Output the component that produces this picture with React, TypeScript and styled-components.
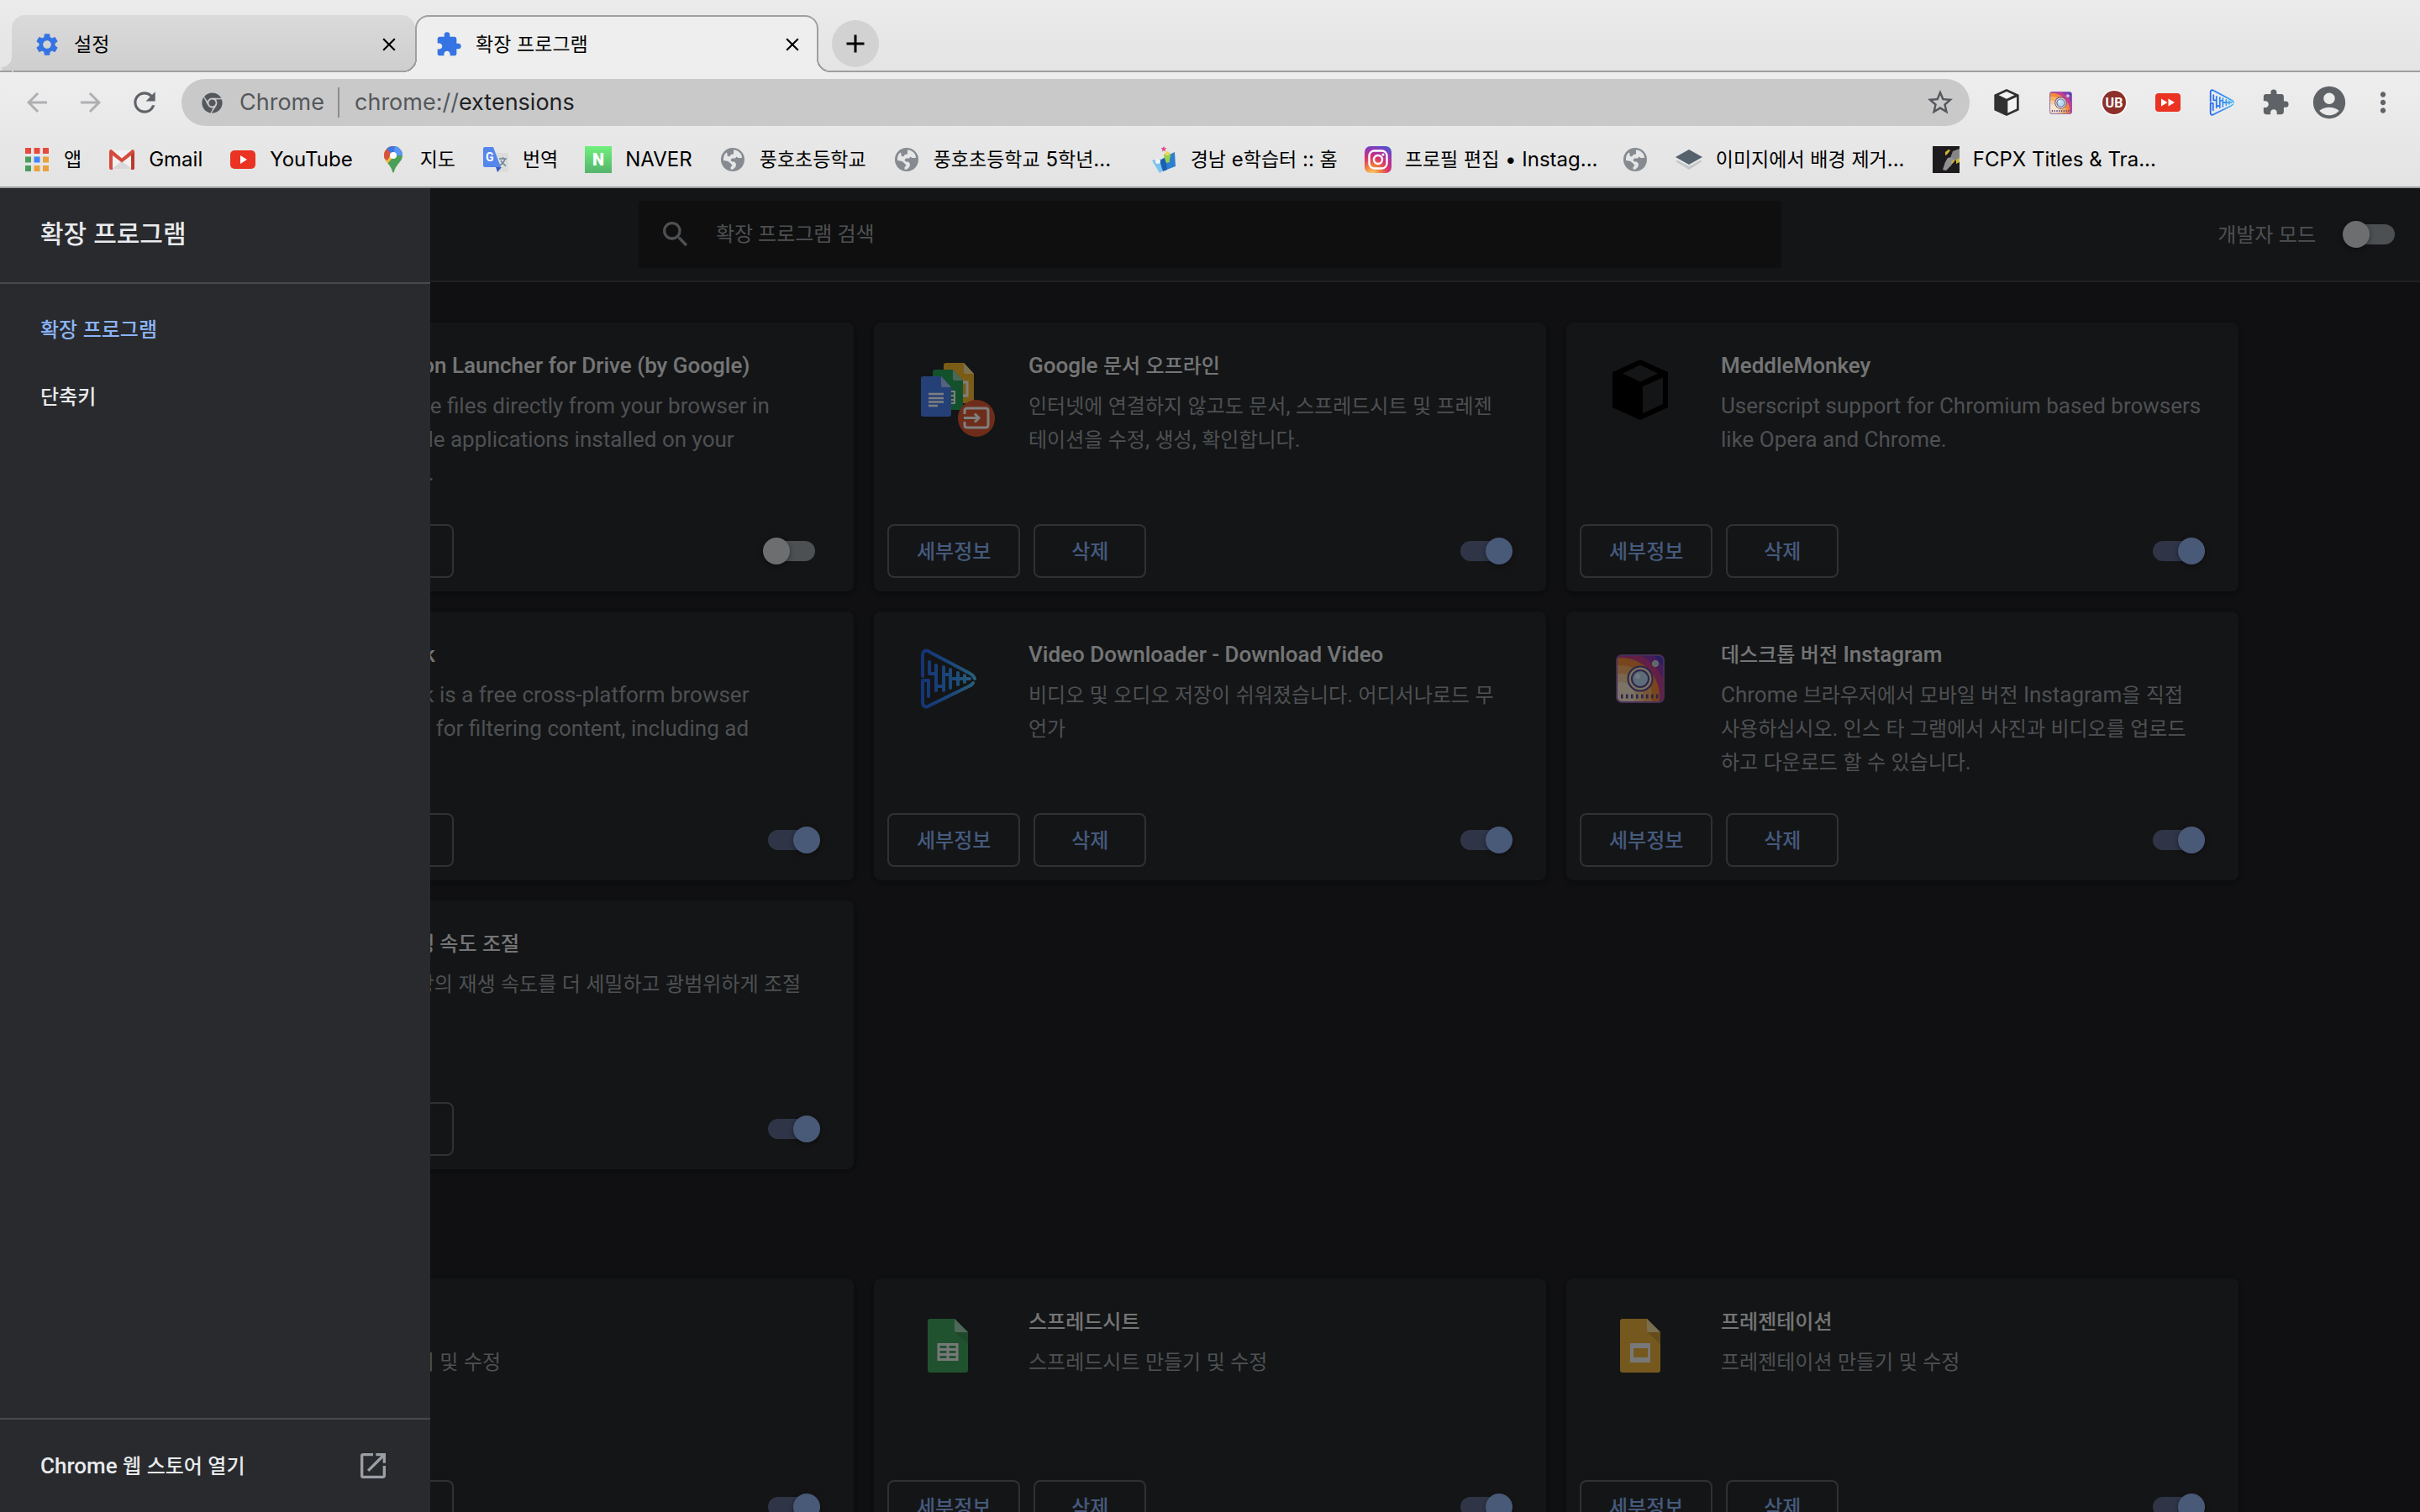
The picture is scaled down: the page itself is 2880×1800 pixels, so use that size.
import React from "react";
import styled, { createGlobalStyle, css } from "styled-components";
import {
  MdAccountCircle,
  MdAdd,
  MdArrowBack,
  MdArrowForward,
  MdClose,
  MdExtension,
  MdMoreVert,
  MdOpenInNew,
  MdRefresh,
  MdSearch,
  MdSettings,
  MdStarBorder,
} from "react-icons/md";
import { FaChrome } from "react-icons/fa";

const ui = '"Inter", "Noto Sans CJK KR", sans-serif';
const page = '"Roboto", "Noto Sans CJK KR", sans-serif';

const color = {
  line: "#9f9f9f",
  chromeIcon: "#5f6368",
  surface: "#292a2d",
  background: "#202124",
  text: "#e8eaed",
  muted: "#9aa0a6",
  accent: "#8ab4f8",
};

const GlobalStyle = createGlobalStyle`
  *, *::before, *::after { box-sizing: border-box; }
  html, body { margin: 0; padding: 0; background: ${color.background}; }
  body { overflow: hidden; }
  h1, h2, h3, p, ul { margin: 0; padding: 0; font-weight: inherit; font-size: inherit; }
  ul { list-style: none; }
  a { color: inherit; text-decoration: none; }
  button, input { font: inherit; color: inherit; margin: 0; padding: 0; border: 0; background: none; outline: none; }
  svg { display: block; flex: none; }
`;

/* Hangul is set a little smaller than the Latin letters beside it. */
const HangulRun = styled.span<{ $size: number }>`
  font-size: ${(p) => p.$size}px;
  line-height: 1;
`;

function Mixed({ text, size = 24 }: { text: string; size?: number }) {
  return (
    <>
      {text.split(/([가-힣]+)/).map((part, i) =>
        i % 2 ? (
          <HangulRun key={i} $size={size}>
            {part}
          </HangulRun>
        ) : (
          part
        )
      )}
    </>
  );
}

/* ---------- icons ---------- */

const AppsIcon = () => (
  <svg width="28" height="28" viewBox="0 0 28 28">
    {["#e64a3c", "#e64a3c", "#e64a3c", "#4a9e5c", "#4285f4", "#e9a23b", "#4a9e5c", "#e9a23b", "#e9a23b"].map((c, i) => (
      <rect key={i} x={(i % 3) * 10.5} y={Math.floor(i / 3) * 10.5} width="7" height="7" fill={c} />
    ))}
  </svg>
);

const GmailIcon = () => (
  <svg width="30" height="24" viewBox="0 0 30 24">
    <rect x="1" y="1" width="28" height="22" rx="2" fill="#f1f1f1" />
    <path d="M15 14 27 23H3z" fill="#d8d8d8" />
    <path d="M0 2.500C0 1 1 0 2.500 0L15 10.500 27.500 0C29 0 30 1 30 2.500V22a2 2 0 0 1-2 2h-2V7L15 15.500 4 7v17H2a2 2 0 0 1-2-2z" fill="#d54b3d" />
    <path d="M26 7l4-4.500V22a2 2 0 0 1-2 2h-2z" fill="#b93a2e" />
  </svg>
);

const YouTubeIcon = () => (
  <svg width="30" height="22" viewBox="0 0 30 22">
    <rect width="30" height="22" rx="5" fill="#ea3323" />
    <path d="M12 6v10l8-5z" fill="#fff" />
  </svg>
);

const MapsIcon = () => (
  <svg width="22" height="32" viewBox="0 0 22 32">
    <defs>
      <clipPath id="pin">
        <path d="M11 0a11 11 0 0 1 11 11c0 4-2 6.500-4.500 9.500S13 26 12 30.500c-.3 1.500-1.700 1.500-2 0C9 26 7 23.500 4.500 20.500S0 15 0 11A11 11 0 0 1 11 0z" />
      </clipPath>
    </defs>
    <g clipPath="url(#pin)">
      <rect width="22" height="32" fill="#4b9f58" />
      <path d="M0 0h22L4 21-4 16z" fill="#f2bb42" />
      <path d="M0 0h14L4 17-4 12z" fill="#d8503f" />
      <path d="M3 3 11 11 22 8V0H4z" fill="#3f77e0" />
      <path d="M13 0h9v11L11 11z" fill="#5b96f3" />
    </g>
    <circle cx="11" cy="11" r="4" fill="#fff" />
  </svg>
);

const TranslateIcon = () => (
  <svg width="30" height="30" viewBox="0 0 30 30">
    <path d="M11 7h17a2 2 0 0 1 2 2v19a2 2 0 0 1-2 2H17z" fill="#dcdcdc" />
    <path d="M15 24h7l-5 6z" fill="#3a5bc0" />
    <path d="M2 0h10l9 24H2a2 2 0 0 1-2-2V2a2 2 0 0 1 2-2z" fill="#5586ec" />
    <path d="M19 14h9M23.500 12v2M26 14c-1 4-3.500 6.500-7 8M21 16c1.500 3 3.500 5 6 6.500" fill="none" stroke="#6b8494" strokeWidth="1.500" />
    <text x="3" y="17" fontFamily="Roboto" fontWeight="700" fontSize="14" fill="#fff">G</text>
  </svg>
);

const NaverIcon = () => (
  <svg width="32" height="32" viewBox="0 0 32 32">
    <defs>
      <linearGradient id="naver" x1="0" y1="0" x2="0" y2="1">
        <stop offset="0" stopColor="#6ff07c" />
        <stop offset="1" stopColor="#55b36c" />
      </linearGradient>
    </defs>
    <rect width="32" height="32" fill="url(#naver)" />
    <text x="16" y="23" textAnchor="middle" fontFamily="Roboto" fontWeight="900" fontSize="20" fill="#fff">N</text>
  </svg>
);

const GlobeIcon = () => (
  <svg width="28" height="28" viewBox="0 0 28 28">
    <circle cx="14" cy="14" r="14" fill="#868b91" />
    <path d="M15 2.500c4 0 8 2.500 9.500 6.500l.5 3h-4.500l-2-1.500-1.500 2h-4l-1.500 2 1.500 2h3l2 2.500-.5 3.500-3 3-3 .3V23l2-2-2-2.500-3-2.500-5.500-1c-.5-4 1-7.500 3.500-9.500l1 1v3l2.500 1 2-2.500 3-.5z" fill="#e6e6e6" />
  </svg>
);

const LearningIcon = () => (
  <svg width="30" height="32" viewBox="0 0 30 32">
    <path d="M1 17l10-2 5 13-6 4z" fill="#7cc4ef" />
    <path d="M16 13l12-6 1 17-13 5z" fill="#2f7fd0" />
    <path d="M10 17l7-4 2 15-5 2z" fill="#1b5fb4" />
    <circle cx="8" cy="18" r="3" fill="#f3f3f3" />
    <path d="M15 10c2-2 4-1 4 1l4-3c1 4-2 7-1 11l-4 1c-1-4-3-6-3-10z" fill="#9bd04d" />
    <circle cx="19" cy="8.500" r="2.500" fill="#f3d65a" />
    <path d="M15 0l1 2 2.500.3-2 1.700.6 2.500L15 5.200l-2.200 1.300.6-2.500-2-1.700L14 2z" fill="#e0508d" />
  </svg>
);

const InstagramIcon = () => (
  <svg width="32" height="32" viewBox="0 0 32 32">
    <defs>
      <radialGradient id="ig" cx=".28" cy="1.050" r="1.150">
        <stop offset="0" stopColor="#fbd872" />
        <stop offset=".28" stopColor="#f0803f" />
        <stop offset=".55" stopColor="#d8316f" />
        <stop offset=".8" stopColor="#9a35b0" />
        <stop offset="1" stopColor="#4c56cf" />
      </radialGradient>
    </defs>
    <rect width="32" height="32" rx="7" fill="url(#ig)" />
    <rect x="5.500" y="5.500" width="21" height="21" rx="6" fill="none" stroke="#fff" strokeWidth="2.400" />
    <circle cx="16" cy="16" r="5" fill="none" stroke="#fff" strokeWidth="2.400" />
    <circle cx="22" cy="10" r="1.500" fill="#fff" />
  </svg>
);

const LayersIcon = () => (
  <svg width="32" height="24" viewBox="0 0 32 24">
    <path d="M16 6 32 14 16 24 0 14z" fill="#c3c8cc" />
    <path d="M16 3 32 11.500 16 20 0 11.500z" fill="#e8e8e8" />
    <path d="M16 0 32 9 16 18 0 9z" fill="#55616c" />
  </svg>
);

const FcpxIcon = () => (
  <svg width="32" height="32" viewBox="0 0 32 32">
    <rect width="32" height="32" fill="#1d1b1e" />
    <path d="M24 6l8-3v12l-4 2-4 1-3-4z" fill="#858487" />
    <path d="M18 14l5-1 3 4-4 6-6 6-4-1 3-9z" fill="#929194" />
    <path d="M15 7l4-3 2 1-4 5-2 1zM28 16l4-2v5l-4 2zM22 19l3-3 1 2-3 3z" fill="#cdb82e" />
  </svg>
);

const CubeIcon = ({ size, shade, face }: { size: number; shade: string; face: string }) => (
  <svg width={size} height={size} viewBox="0 0 72 72">
    <path d="M36 0 69 15v42L36 72 3 57V15z" fill={shade} />
    <path d="M36 6.500 57 16.500 36 26.500 15 16.500z" fill={face} />
    <path d="M39 32 63 21.500V53L39 64z" fill={face} />
  </svg>
);

/* `margin` is the empty frame kept around the camera, in drawing units. */
const CameraIcon = ({ size, margin = 0 }: { size: number; margin?: number }) => (
  <svg width={size} height={size} viewBox={`${-margin} ${-margin} ${58 + 2 * margin} ${58 + 2 * margin}`}>
    <defs>
      <clipPath id="camera">
        <rect x="1" y="1" width="56" height="56" rx="6" />
      </clipPath>
    </defs>
    <g clipPath="url(#camera)">
      <rect width="58" height="58" fill="#4d3fc4" />
      <circle cx="6" cy="50" r="62" fill="#8d39b5" />
      <circle cx="6" cy="50" r="54" fill="#c4418f" />
      <circle cx="6" cy="50" r="46" fill="#f08a3c" />
      <circle cx="6" cy="50" r="37" fill="#f3ae68" />
      <circle cx="6" cy="50" r="27" fill="#f2cfa0" />
      <circle cx="6" cy="50" r="17" fill="#f7e6cc" />
    </g>
    <rect x="1" y="1" width="56" height="56" rx="6" fill="none" stroke="#8f5fa8" strokeWidth="2" />
    <circle cx="29" cy="29" r="15.500" fill="#5a4a92" />
    <circle cx="29" cy="29" r="13.500" fill="#f2e2c4" />
    <circle cx="29" cy="29" r="11" fill="#5a4a92" />
    <circle cx="29" cy="29" r="9" fill="#b9d8f2" />
    <circle cx="26" cy="26" r="3" fill="#e4f3ff" />
    <circle cx="47" cy="11" r="3.500" fill="#9fd8e6" stroke="#f2e2c4" strokeWidth="1" />
    <path d="M6 50h46" stroke="#5a4a92" strokeWidth="5" strokeDasharray="2.500 3.500" />
  </svg>
);

const UBlockIcon = () => (
  <svg width="32" height="32" viewBox="0 0 32 32">
    <circle cx="16" cy="16" r="15.500" fill="#fff" />
    <circle cx="16" cy="16" r="14" fill="#8d2f2a" />
    <text x="16" y="21.500" textAnchor="middle" fontFamily="Roboto" fontWeight="700" fontSize="16" fill="#fff">UB</text>
  </svg>
);

const SpeedIcon = () => (
  <svg width="32" height="22" viewBox="0 0 32 22">
    <rect x="1" width="30" height="22" rx="4" fill="#ea3323" />
    <path d="M8 6.500v9l7.500-4.500zM16.500 6.500v9L24 11z" fill="#fff" />
  </svg>
);

const WaveIcon = ({ size, id }: { size: number; id: string }) => (
  <svg width={size} height={size} viewBox="0 0 72 72">
    <defs>
      <linearGradient id={id} gradientUnits="userSpaceOnUse" x1="0" y1="0" x2="72" y2="0">
        <stop offset="0" stopColor="#2563ef" />
        <stop offset=".55" stopColor="#3690f4" />
        <stop offset="1" stopColor="#54c3f0" />
      </linearGradient>
    </defs>
    <g fill="none" stroke={`url(#${id})`} strokeWidth="4" strokeLinecap="round" strokeLinejoin="round">
      <path d="M6 33V8c0-5 4-7 8-4l47 25c4 2 6 4 7 7" />
      <path d="M66 41c-1 2-3 3-5 4L14 68c-4 3-8 1-8-4V38h7v19" />
      <path d="M14 16v14h8M22 20v30M22 45h8M31 22v28M31 31h8M39 25v22M39 36h23M48 29v14M56 32v8" />
    </g>
  </svg>
);

const FilePaper = ({ x, y, fill, fold }: { x: number; y: number; fill: string; fold: string }) => (
  <g transform={`translate(${x} ${y})`}>
    <path d="M3 0h21l12 13v32a3 3 0 0 1-3 3H3a3 3 0 0 1-3-3V3a3 3 0 0 1 3-3z" fill={fill} />
    <path d="M24 0l12 13H26a2 2 0 0 1-2-2z" fill={fold} />
  </g>
);

const DocsOfflineIcon = () => (
  <svg width="96" height="96" viewBox="0 0 96 96">
    <FilePaper x={31} y={4} fill="#f4b92f" fold="#fae3a4" />
    <rect x="52" y="27" width="7" height="16" fill="none" stroke="#fff" strokeWidth="3" />
    <FilePaper x={18} y={12} fill="#27a35a" fold="#93d1ac" />
    <path d="M38 38h6v14h-6M38 43h6M38 48h6" fill="none" stroke="#fff" strokeWidth="2" />
    <FilePaper x={4} y={20} fill="#4a80ef" fold="#a6c4fa" />
    <path d="M13 41h18M13 46h18M13 50.500h18M13 55h11" stroke="#fff" strokeWidth="2.500" />
    <circle cx="70" cy="70" r="22" fill="#dd5a34" />
    <path d="M56 65v-4c0-2 1-3 3-3h22c2 0 3 1 3 3v17c0 2-1 3-3 3H59c-2 0-3-1-3-3v-4M55 69.500h18M68 64.500l5 5-5 5" fill="none" stroke="#fff" strokeWidth="3" />
  </svg>
);

const AppFileIcon = ({ kind }: { kind: "docs" | "sheets" | "slides" }) => {
  const fill = { docs: "#4285f4", sheets: "#43a560", slides: "#e8b13d" }[kind];
  const fold = { docs: "#a6c4fa", sheets: "#9fd0ad", slides: "#f3dc9d" }[kind];
  return (
    <svg width="72" height="72" viewBox="0 0 72 72">
      <path d="M15 4h29l16 16v45a3 3 0 0 1-3 3H15a3 3 0 0 1-3-3V7a3 3 0 0 1 3-3z" fill={fill} />
      <path d="M44 20h16v14z" fill="#000" opacity=".12" />
      <path d="M44 4l16 16H46a2 2 0 0 1-2-2z" fill={fold} />
      {kind === "docs" && <path d="M22 36h28M22 43h28M22 50h20" stroke="#f1f1f1" strokeWidth="4" />}
      {kind === "sheets" && (
        <path d="M25 34.500h22v18H25zM25 40.500h22M25 46.500h22M36 34v19" fill="none" stroke="#f1f1f1" strokeWidth="3" />
      )}
      {kind === "slides" && <path d="M24 33h24v23H24zM28 39v11h17V39z" fill="#f1f1f1" fillRule="evenodd" />}
    </svg>
  );
};

/* ---------- browser frame ---------- */

const Window = styled.div`
  display: flex;
  flex-direction: column;
  height: 100vh;
  overflow: hidden;
`;

const TabStrip = styled.div`
  flex: none;
  display: flex;
  align-items: stretch;
  height: 86px;
  padding: 18px 14px 0;
  background: linear-gradient(#ebebeb, #e4e4e4);
  box-shadow: inset 0 -2px ${color.line};
  font: 24px/32px ${ui};
  color: #000;
`;

const Tab = styled.div<{ $active?: boolean }>`
  position: relative;
  flex: 0 1 480px;
  display: flex;
  align-items: center;
  gap: 16px;
  padding: 0 18px 0 24px;
  border: 2px solid transparent;
  border-bottom: 0;
  border-radius: 16px 16px 0 0;

  &::before,
  &::after {
    content: "";
    position: absolute;
    bottom: 0;
    width: 16px;
    height: 16px;
  }
  &::before { left: -16px; }
  &::after { right: -16px; }

  ${(p) =>
    p.$active
      ? css`
          padding-left: 22px;
          background: #eeeeee;
          border-color: ${color.line};
          &::before { background: radial-gradient(circle at 0 0, transparent 14px, ${color.line} 14px 16px, #eeeeee 16px); }
          &::after { background: radial-gradient(circle at 100% 0, transparent 14px, ${color.line} 14px 16px, #eeeeee 16px); }
        `
      : css`
          background: linear-gradient(#dadada, #cecece) border-box;
          box-shadow: inset 0 -2px ${color.line};
          &::before { bottom: 2px; left: -14px; width: 12px; background: radial-gradient(circle at 0 0, transparent 12px, #cfcfcf 12px); }
        `}
`;

const TabTitle = styled.span`
  flex: 1;
  overflow: hidden;
  white-space: nowrap;
`;

const IconButton = styled.button<{ $width?: number }>`
  display: grid;
  place-items: center;
  width: ${(p) => p.$width ?? 64}px;
  height: 64px;
  flex: none;
`;

const NewTab = styled.button`
  display: grid;
  place-items: center;
  align-self: center;
  width: 56px;
  height: 56px;
  margin-left: 16px;
  border-radius: 50%;
  background: #d2d2d2;
`;

const Bars = styled.header`
  flex: none;
  background: linear-gradient(#eeeeee, #e3e3e3);
  border-bottom: 2px solid ${color.line};
`;

const Toolbar = styled.div`
  display: flex;
  align-items: center;
  gap: 12px;
  height: 72px;
  padding: 0 12px;
  color: ${color.chromeIcon};
`;

const ButtonGroup = styled.div`
  display: flex;
`;

const Omnibox = styled.div`
  flex: 1;
  display: flex;
  align-items: center;
  height: 56px;
  padding: 0 3px 0 24px;
  border-radius: 28px;
  background: #c9c9c9;
  font: 27px/36px ${ui};
  color: #54585c;
`;

const OmniChip = styled.span`
  margin: 0 16px 0 20px;
`;

const Address = styled.label`
  flex: 1;
  display: flex;
  align-items: center;
  padding-left: 18px;
  border-left: 2px solid #8c8c8c;
`;

const AddressInput = styled.input`
  flex: 1;
  min-width: 0;
  color: #202124;
`;

const Bookmarks = styled.ul`
  display: flex;
  gap: 32px;
  height: 64px;
  padding: 0 28px;
  font: 24px/32px ${ui};
  color: #000;
`;

const Bookmark = styled.a<{ $width?: number }>`
  display: flex;
  align-items: center;
  gap: 16px;
  height: 100%;
  width: ${(p) => (p.$width ? `${p.$width}px` : "auto")};
  white-space: nowrap;
`;

const Favicon = styled.span`
  flex: none;
  display: grid;
  place-items: center;
  width: 32px;
  height: 32px;
`;

/* ---------- extensions page ---------- */

const Viewport = styled.div`
  position: relative;
  flex: 1;
  min-height: 0;
  overflow: hidden;
  background: ${color.background};
  font: 26px/40px ${page};
  color: ${color.text};
`;

const PageHeader = styled.div`
  display: grid;
  grid-template-columns: 1fr minmax(0, 1360px) 1fr;
  align-items: center;
  height: 112px;
  border-bottom: 2px solid #3f4145;
  background: ${color.surface};
`;

const SearchBox = styled.label`
  grid-column: 2;
  display: flex;
  align-items: center;
  gap: 28px;
  height: 80px;
  padding: 0 24px;
  border-radius: 4px;
  background: #1f1f1f;
  color: ${color.muted};
`;

const SearchInput = styled.input`
  flex: 1;
  font-size: 24px;
  &::placeholder { color: ${color.muted}; opacity: 1; }
`;

const DevMode = styled.label`
  display: flex;
  align-items: center;
  justify-content: flex-end;
  gap: 32px;
  padding-right: 24px;
  color: ${color.muted};
`;

const Toggle = styled.input`
  appearance: none;
  flex: none;
  display: grid;
  align-items: center;
  width: 68px;
  height: 32px;

  &::before,
  &::after {
    content: "";
    grid-area: 1 / 1;
  }
  &::before {
    width: 56px;
    height: 24px;
    margin-left: 6px;
    border-radius: 12px;
    background: ${color.muted};
  }
  &::after {
    width: 32px;
    height: 32px;
    border-radius: 50%;
    background: #dadce0;
    box-shadow: 0 2px 6px rgba(0, 0, 0, 0.4);
  }
  &:checked::before { background: #5e6b8e; }
  &:checked::after {
    justify-self: end;
    background: #92b4f0;
  }
`;

const Content = styled.main`
  display: flex;
  flex-direction: column;
  max-width: 2448px;
  margin: 0 auto;
  padding-top: 48px;
`;

const SectionTitle = styled.h2`
  padding: 52px 0 38px;
`;

const CardGrid = styled.div`
  display: grid;
  grid-template-columns: repeat(3, minmax(0, 1fr));
  gap: 24px;
`;

const Card = styled.article`
  display: flex;
  flex-direction: column;
  justify-content: space-between;
  height: 320px;
  padding: 31px 16px 16px;
  border-radius: 8px;
  background: ${color.surface};
  box-shadow: 0 2px 6px 2px rgba(0, 0, 0, 0.3);
`;

const CardBody = styled.div`
  display: grid;
  grid-template-columns: 168px 1fr;
  padding-right: 28px;
`;

const CardIcon = styled.div`
  width: 72px;
  height: 72px;
  margin: 13px 0 0 36px;
`;

const CardTitle = styled.h3`
  margin-bottom: 8px;
  font-weight: 500;
`;

const CardText = styled.p`
  color: ${color.muted};
`;

const CardActions = styled.div`
  display: flex;
  align-items: center;
  gap: 16px;
  padding-right: 24px;

  ${Toggle} { margin-left: auto; }
`;

const Action = styled.button`
  min-width: 134px;
  height: 64px;
  padding: 0 33px;
  border: 2px solid #5f6368;
  border-radius: 8px;
  font-weight: 500;
  color: ${color.accent};
`;

const Scrim = styled.div`
  position: absolute;
  inset: 0;
  background: rgba(0, 0, 0, 0.5);
`;

const Drawer = styled.aside`
  position: absolute;
  inset: 0 auto 0 0;
  display: flex;
  flex-direction: column;
  width: 512px;
  background: ${color.surface};
  font-weight: 500;
`;

const DrawerTitle = styled.h1`
  height: 114px;
  padding: 0 48px;
  border-bottom: 2px solid #47494d;
  font-size: 32px;
  line-height: 108px;
`;

const DrawerNav = styled.nav`
  flex: 1;
  display: flex;
  flex-direction: column;
  padding-top: 14px;
`;

const DrawerLink = styled.a<{ $active?: boolean }>`
  padding: 20px 48px;
  color: ${(p) => (p.$active ? color.accent : color.text)};
`;

const StoreLink = styled.a`
  display: flex;
  align-items: center;
  justify-content: space-between;
  height: 112px;
  padding: 0 48px;
  border-top: 2px solid #47494d;

  svg { color: ${color.muted}; }
`;

/* ---------- data ---------- */

type Extension = { title: string; text: string; icon?: React.ReactNode; on: boolean };

const extensions: Extension[] = [
  {
    title: "Application Launcher for Drive (by Google)",
    text: "Open Drive files directly from your browser in compatible applications installed on your computer.",
    on: false,
  },
  {
    title: "Google 문서 오프라인",
    text: "인터넷에 연결하지 않고도 문서, 스프레드시트 및 프레젠테이션을 수정, 생성, 확인합니다.",
    icon: <DocsOfflineIcon />,
    on: true,
  },
  {
    title: "MeddleMonkey",
    text: "Userscript support for Chromium based browsers like Opera and Chrome.",
    icon: <CubeIcon size={72} shade="#000" face={color.surface} />,
    on: true,
  },
  {
    title: "Ad uBlock",
    text: "Ad uBlock is a free cross-platform browser extension for filtering content, including ad blocking.",
    on: true,
  },
  {
    title: "Video Downloader - Download Video",
    text: "비디오 및 오디오 저장이 쉬워졌습니다. 어디서나로드 무언가",
    icon: <WaveIcon size={72} id="wave-card" />,
    on: true,
  },
  {
    title: "데스크톱 버전 Instagram",
    text: "Chrome 브라우저에서 모바일 버전 Instagram을 직접 사용하십시오. 인스 타 그램에서 사진과 비디오를 업로드하고 다운로드 할 수 있습니다.",
    icon: <CameraIcon size={72} margin={7} />,
    on: true,
  },
  { title: "유튜브 재생 속도 조절", text: "유튜브 영상의 재생 속도를 더 세밀하고 광범위하게 조절", on: true },
];

const apps: Extension[] = [
  { title: "문서", text: "문서 만들기 및 수정", icon: <AppFileIcon kind="docs" />, on: true },
  { title: "스프레드시트", text: "스프레드시트 만들기 및 수정", icon: <AppFileIcon kind="sheets" />, on: true },
  { title: "프레젠테이션", text: "프레젠테이션 만들기 및 수정", icon: <AppFileIcon kind="slides" />, on: true },
];

const bookmarks: { icon: React.ReactNode; label: string; width?: number }[] = [
  { icon: <AppsIcon />, label: "앱" },
  { icon: <GmailIcon />, label: "Gmail" },
  { icon: <YouTubeIcon />, label: "YouTube" },
  { icon: <MapsIcon />, label: "지도" },
  { icon: <TranslateIcon />, label: "번역" },
  { icon: <NaverIcon />, label: "NAVER" },
  { icon: <GlobeIcon />, label: "풍호초등학교" },
  { icon: <GlobeIcon />, label: "풍호초등학교 5학년...", width: 274 },
  { icon: <LearningIcon />, label: "경남 e학습터 :: 홈" },
  { icon: <InstagramIcon />, label: "프로필 편집 • Instag...", width: 274 },
  { icon: <GlobeIcon />, label: "" },
  { icon: <LayersIcon />, label: "이미지에서 배경 제거...", width: 274 },
  { icon: <FcpxIcon />, label: "FCPX Titles & Tra..." },
];

const ExtensionCard = ({ item }: { item: Extension }) => (
  <Card>
    <CardBody>
      <CardIcon>{item.icon}</CardIcon>
      <div>
        <CardTitle><Mixed text={item.title} /></CardTitle>
        <CardText><Mixed text={item.text} /></CardText>
      </div>
    </CardBody>
    <CardActions>
      <Action type="button"><Mixed text="세부정보" /></Action>
      <Action type="button"><Mixed text="삭제" /></Action>
      <Toggle type="checkbox" defaultChecked={item.on} aria-label={item.title} />
    </CardActions>
  </Card>
);

export default function App() {
  return (
    <Window>
      <GlobalStyle />
      <TabStrip>
        <Tab>
          <MdSettings size={32} color="#3574e2" />
          <TabTitle><Mixed text="설정" size={23} /></TabTitle>
          <IconButton $width={24} aria-label="탭 닫기"><MdClose size={26} /></IconButton>
        </Tab>
        <Tab $active>
          <MdExtension size={32} color="#3574e2" />
          <TabTitle><Mixed text="확장 프로그램" size={23} /></TabTitle>
          <IconButton $width={24} aria-label="탭 닫기"><MdClose size={26} /></IconButton>
        </Tab>
        <NewTab aria-label="새 탭"><MdAdd size={36} /></NewTab>
      </TabStrip>

      <Bars>
        <Toolbar>
          <ButtonGroup>
            <IconButton aria-label="뒤로"><MdArrowBack size={36} color="#aeb0b2" /></IconButton>
            <IconButton aria-label="앞으로"><MdArrowForward size={36} color="#aeb0b2" /></IconButton>
            <IconButton aria-label="새로고침"><MdRefresh size={38} /></IconButton>
          </ButtonGroup>
          <Omnibox>
            <FaChrome size={25} />
            <OmniChip>Chrome</OmniChip>
            <Address>
              chrome://
              <AddressInput aria-label="주소창" defaultValue="extensions" />
            </Address>
            <IconButton aria-label="북마크 추가"><MdStarBorder size={36} /></IconButton>
          </Omnibox>
          <ButtonGroup>
            <IconButton aria-label="MeddleMonkey"><CubeIcon size={32} shade="#303030" face="#f4f4f4" /></IconButton>
            <IconButton aria-label="Instagram"><CameraIcon size={27} /></IconButton>
            <IconButton aria-label="uBlock"><UBlockIcon /></IconButton>
            <IconButton aria-label="재생 속도"><SpeedIcon /></IconButton>
            <IconButton aria-label="Video Downloader"><WaveIcon size={32} id="wave-bar" /></IconButton>
            <IconButton aria-label="확장 프로그램"><MdExtension size={34} /></IconButton>
            <IconButton aria-label="프로필"><MdAccountCircle size={46} /></IconButton>
            <IconButton aria-label="메뉴"><MdMoreVert size={38} /></IconButton>
          </ButtonGroup>
        </Toolbar>
        <Bookmarks>
          {bookmarks.map((b, i) => (
            <li key={i}>
              <Bookmark href="#" $width={b.width}>
                <Favicon>{b.icon}</Favicon>
                {b.label && <span><Mixed text={b.label} size={23} /></span>}
              </Bookmark>
            </li>
          ))}
        </Bookmarks>
      </Bars>

      <Viewport>
        <PageHeader>
          <SearchBox>
            <MdSearch size={40} />
            <SearchInput type="search" placeholder="확장 프로그램 검색" />
          </SearchBox>
          <DevMode>
            <span><Mixed text="개발자 모드" /></span>
            <Toggle type="checkbox" />
          </DevMode>
        </PageHeader>
        <Content>
          <CardGrid>
            {extensions.map((e) => <ExtensionCard key={e.title} item={e} />)}
          </CardGrid>
          <SectionTitle><Mixed text="Chrome 앱" /></SectionTitle>
          <CardGrid>
            {apps.map((e) => <ExtensionCard key={e.title} item={e} />)}
          </CardGrid>
        </Content>
        <Scrim />
        <Drawer>
          <DrawerTitle><Mixed text="확장 프로그램" size={30} /></DrawerTitle>
          <DrawerNav>
            <DrawerLink href="#extensions" $active><Mixed text="확장 프로그램" /></DrawerLink>
            <DrawerLink href="#shortcuts"><Mixed text="단축키" /></DrawerLink>
          </DrawerNav>
          <StoreLink href="#store">
            <span><Mixed text="Chrome 웹 스토어 열기" /></span>
            <MdOpenInNew size={40} />
          </StoreLink>
        </Drawer>
      </Viewport>
    </Window>
  );
}
